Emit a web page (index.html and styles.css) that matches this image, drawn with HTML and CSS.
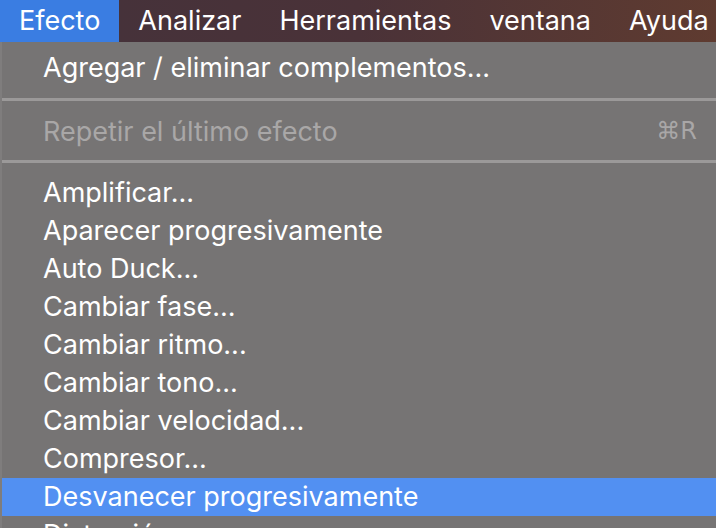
FILE: index.html
```html
<!DOCTYPE html>
<html lang="es">
<head>
<meta charset="utf-8">
<title>Efecto</title>
<link rel="stylesheet" href="styles.css">
</head>
<body>
<div class="menubar">
  <div class="bar-item active">Efecto</div>
  <div class="bar-item">Analizar</div>
  <div class="bar-item">Herramientas</div>
  <div class="bar-item">ventana</div>
  <div class="bar-item">Ayuda</div>
</div>
<div class="menu">
  <div class="item">Agregar / eliminar complementos...</div>
  <div class="sep sep-a"></div>
  <div class="item disabled"><span>Repetir el último efecto</span><span class="shortcut">⌘R</span></div>
  <div class="sep sep-b"></div>
  <div class="item">Amplificar...</div>
  <div class="item">Aparecer progresivamente</div>
  <div class="item">Auto Duck...</div>
  <div class="item">Cambiar fase...</div>
  <div class="item">Cambiar ritmo...</div>
  <div class="item">Cambiar tono...</div>
  <div class="item">Cambiar velocidad...</div>
  <div class="item">Compresor...</div>
  <div class="item selected">Desvanecer progresivamente</div>
  <div class="item">Distorsión...</div>
</div>
</body>
</html>
```

FILE: styles.css
```css
html, body {
  margin: 0;
  padding: 0;
  width: 716px;
  height: 528px;
  overflow: hidden;
  background: #767474;
  font-family: Inter, "Noto Sans", "DejaVu Sans", sans-serif;
  color: #ffffff;
}

.menubar {
  display: flex;
  height: 42px;
  background: linear-gradient(to right, #44323b 0%, #4a3238 50%, #5f3b30 100%);
}

.bar-item {
  padding: 0 19px;
  font-size: 27px;
  line-height: 41px;
  white-space: nowrap;
}

.bar-item.active {
  background: #3a7de2;
}

.menu {
  height: 486px;
  overflow: hidden;
  padding-top: 7px;
  border-left: 2px solid #7f7d7d;
  background: #767474;
  box-sizing: border-box;
}

.item {
  display: flex;
  justify-content: space-between;
  height: 38px;
  line-height: 37px;
  padding: 0 19px 0 41px;
  font-size: 27px;
  white-space: nowrap;
}

.item.disabled {
  color: #a9a7a7;
}

.item.selected {
  background: #5290f2;
}

.shortcut {
  font-family: "DejaVu Sans", Inter, sans-serif;
  font-size: 24px;
}

.sep {
  height: 3px;
  background: #9b9999;
}

.sep-a {
  margin: 11px 0 12px;
}

.sep-b {
  margin: 9px 0 11px;
}
```
